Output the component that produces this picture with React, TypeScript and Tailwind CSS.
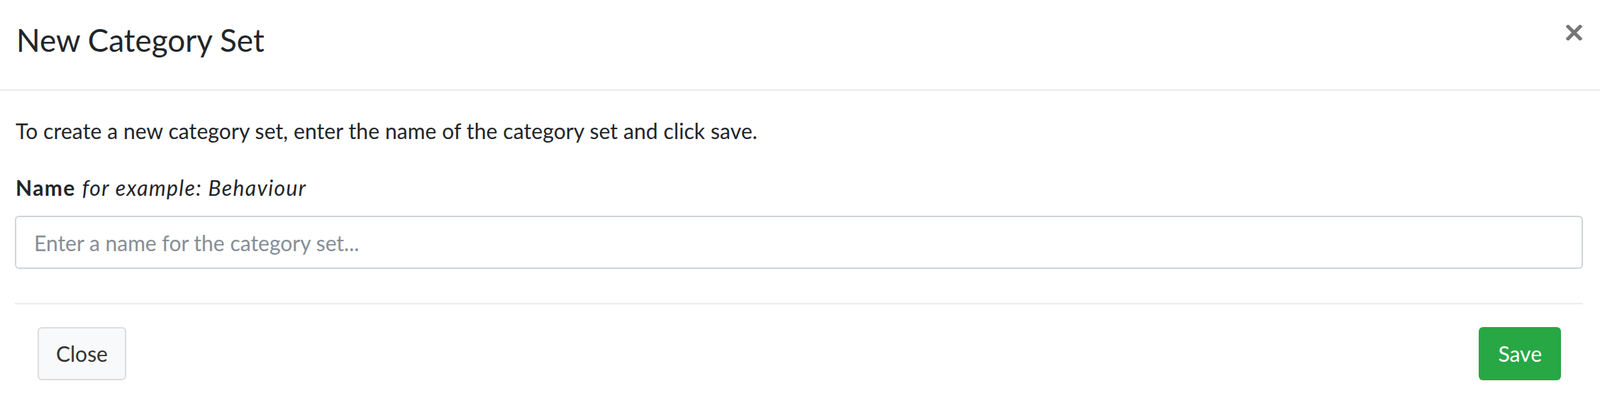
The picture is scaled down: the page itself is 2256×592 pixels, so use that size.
const font = { fontFamily: 'Lato, "Noto Sans", sans-serif' };

const CloseIcon = () => (
  <svg width="23" height="22" viewBox="0 0 23 22" aria-hidden="true">
    <path d="M3 2.5 L20 19.5 M20 2.5 L3 19.5" stroke="#777777" strokeWidth="5" strokeLinecap="square" fill="none" />
  </svg>
);

export default function App() {
  return (
    <div className="w-[2256px] h-[592px] bg-white text-[#212529] overflow-hidden" style={font}>
      <div className="h-[128px] border-b-2 border-[#e9ecef] flex items-start justify-between pl-[23px] pr-[25px] pt-[30px]">
        <h4 className="text-[44px] leading-[1.2] font-normal">New Category Set</h4>
        <button className="mt-[5px]">
          <CloseIcon />
        </button>
      </div>

      <div className="pl-[21px] pr-[24px] pt-[34px]">
        <p className="text-[30px] leading-[1.5] pl-[1px] tracking-[0.1px]">
          To create a new category set, enter the name of the category set and click save.
        </p>
        <label className="block text-[30px] leading-[1.5] mt-[35px] pl-[1px] tracking-[1.4px]">
          <span className="font-bold">Name</span> <em>for example: Behaviour</em>
        </label>
        <input
          type="text"
          placeholder="Enter a name for the category set..."
          className="mt-[17px] block w-full h-[75px] border-2 border-[#ced4da] rounded-[6px] pl-[25px] pr-[20px] text-[30px] placeholder:text-[#868e96] outline-none"
        />
        <div className="mt-[48px] border-t-2 border-[#e9ecef]" />
        <div className="flex justify-between items-center mt-[32px] pl-[32px] pr-[31px]">
          <button className="h-[75px] px-[24px] bg-[#f8f9fa] border-2 border-[#dddddd] rounded-[6px] text-[30px] text-[#333333]">
            Close
          </button>
          <button className="h-[75px] px-[27px] bg-[#28a745] rounded-[6px] text-[30px] text-white">
            Save
          </button>
        </div>
      </div>
    </div>
  );
}
